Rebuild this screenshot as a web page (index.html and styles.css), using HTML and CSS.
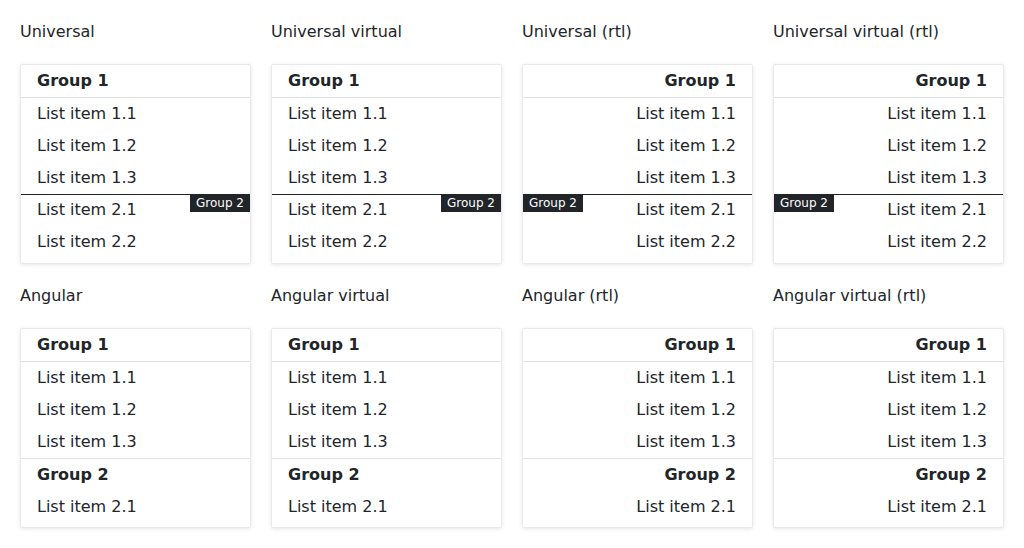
FILE: index.html
```html
<!DOCTYPE html>
<html lang="en">
<head>
<meta charset="utf-8">
<title>List groups</title>
<link rel="stylesheet" href="styles.css">
</head>
<body>
<main class="grid">
  <section class="demo">
    <h2 class="demo-title">Universal</h2>
    <div class="list">
      <div class="group-header">Group 1</div>
      <div class="item">List item 1.1</div>
      <div class="item">List item 1.2</div>
      <div class="item">List item 1.3</div>
      <div class="item sticky-edge"><span class="badge">Group 2</span>List item 2.1</div>
      <div class="item">List item 2.2</div>
    </div>
  </section>
  <section class="demo">
    <h2 class="demo-title">Universal virtual</h2>
    <div class="list">
      <div class="group-header">Group 1</div>
      <div class="item">List item 1.1</div>
      <div class="item">List item 1.2</div>
      <div class="item">List item 1.3</div>
      <div class="item sticky-edge"><span class="badge">Group 2</span>List item 2.1</div>
      <div class="item">List item 2.2</div>
    </div>
  </section>
  <section class="demo">
    <h2 class="demo-title">Universal (rtl)</h2>
    <div class="list rtl">
      <div class="group-header">Group 1</div>
      <div class="item">List item 1.1</div>
      <div class="item">List item 1.2</div>
      <div class="item">List item 1.3</div>
      <div class="item sticky-edge"><span class="badge">Group 2</span>List item 2.1</div>
      <div class="item">List item 2.2</div>
    </div>
  </section>
  <section class="demo">
    <h2 class="demo-title">Universal virtual (rtl)</h2>
    <div class="list rtl">
      <div class="group-header">Group 1</div>
      <div class="item">List item 1.1</div>
      <div class="item">List item 1.2</div>
      <div class="item">List item 1.3</div>
      <div class="item sticky-edge"><span class="badge">Group 2</span>List item 2.1</div>
      <div class="item">List item 2.2</div>
    </div>
  </section>

  <section class="demo">
    <h2 class="demo-title">Angular</h2>
    <div class="list">
      <div class="group-header">Group 1</div>
      <div class="item">List item 1.1</div>
      <div class="item">List item 1.2</div>
      <div class="item">List item 1.3</div>
      <div class="group-header next">Group 2</div>
      <div class="item">List item 2.1</div>
    </div>
  </section>
  <section class="demo">
    <h2 class="demo-title">Angular virtual</h2>
    <div class="list">
      <div class="group-header">Group 1</div>
      <div class="item">List item 1.1</div>
      <div class="item">List item 1.2</div>
      <div class="item">List item 1.3</div>
      <div class="group-header next">Group 2</div>
      <div class="item">List item 2.1</div>
    </div>
  </section>
  <section class="demo">
    <h2 class="demo-title">Angular (rtl)</h2>
    <div class="list rtl">
      <div class="group-header">Group 1</div>
      <div class="item">List item 1.1</div>
      <div class="item">List item 1.2</div>
      <div class="item">List item 1.3</div>
      <div class="group-header next">Group 2</div>
      <div class="item">List item 2.1</div>
    </div>
  </section>
  <section class="demo">
    <h2 class="demo-title">Angular virtual (rtl)</h2>
    <div class="list rtl">
      <div class="group-header">Group 1</div>
      <div class="item">List item 1.1</div>
      <div class="item">List item 1.2</div>
      <div class="item">List item 1.3</div>
      <div class="group-header next">Group 2</div>
      <div class="item">List item 2.1</div>
    </div>
  </section>
</main>
</body>
</html>
```

FILE: styles.css
```css
html, body {
  margin: 0;
  padding: 0;
  background: #ffffff;
}

body {
  font-family: "DejaVu Sans", sans-serif;
  font-size: 16px;
  color: #212529;
}

.grid {
  display: grid;
  grid-template-columns: repeat(4, 1fr);
  column-gap: 20px;
  row-gap: 20px;
  padding: 20px 20px 20px;
}

.demo {
  display: flex;
  flex-direction: column;
}

.demo-title {
  margin: 0 0 20px;
  font-size: 16px;
  font-weight: normal;
  line-height: 24px;
  color: #212529;
}

.list {
  box-sizing: border-box;
  height: 200px;
  overflow: hidden;
  border: 1px solid #e8e8ee;
  border-radius: 2px;
  background: #ffffff;
  box-shadow: 0 1px 4px rgba(0, 0, 0, 0.1);
}

.group-header {
  padding: 4px 16px;
  line-height: 24px;
  font-weight: bold;
  border-bottom: 1px solid #dee2e6;
}

.group-header.next {
  border-bottom: none;
  border-top: 1px solid #dee2e6;
}

.item {
  padding: 4px 16px;
  line-height: 24px;
}

.rtl {
  direction: rtl;
}

.sticky-edge {
  position: relative;
}

.sticky-edge::before {
  content: "";
  position: absolute;
  left: 0;
  right: 0;
  top: 0;
  height: 1px;
  background: #212529;
}

.badge {
  position: absolute;
  top: 0;
  right: 0;
  padding: 0 6px;
  font-size: 12px;
  line-height: 18px;
  color: #ffffff;
  background: #212529;
}

.rtl .badge {
  right: auto;
  left: 0;
}
```
